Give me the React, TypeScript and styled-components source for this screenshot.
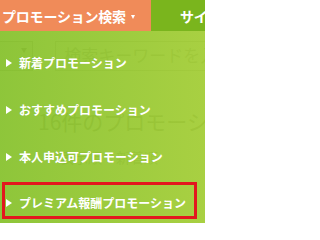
import React from "react";
import styled, { createGlobalStyle } from "styled-components";

const GlobalStyle = createGlobalStyle`
  html, body {
    margin: 0;
    padding: 0;
    background: #ffffff;
    width: 205px;
    height: 223px;
    overflow: hidden;
  }
  body {
    font-family: "Noto Sans CJK JP", "Noto Sans", "Liberation Sans", sans-serif;
  }
`;

const Page = styled.div`
  width: 205px;
  height: 223px;
  display: flex;
  flex-direction: column;
  overflow: hidden;
`;

const TopNav = styled.nav`
  display: flex;
  height: 31px;
  flex: 0 0 31px;
`;

const NavTab = styled.div<{ $active?: boolean }>`
  display: flex;
  align-items: center;
  flex: ${(p) => (p.$active ? "0 0 151px" : "1 1 auto")};
  padding-left: ${(p) => (p.$active ? "2px" : "29px")};
  background: ${(p) => (p.$active ? "#f08b59" : "#7ab51d")};
  color: #ffffff;
  font-size: 14px;
  font-weight: 700;
  letter-spacing: -0.2px;
  white-space: nowrap;
  overflow: hidden;
  box-sizing: border-box;
`;

const Caret = styled.span`
  display: inline-block;
  width: 0;
  height: 0;
  margin-left: 5px;
  margin-top: 2px;
  border-left: 2.5px solid transparent;
  border-right: 2.5px solid transparent;
  border-top: 4px solid #ffffff;
`;

const Content = styled.div`
  position: relative;
  flex: 1 1 auto;
  overflow: hidden;
`;

const SearchRow = styled.div`
  display: flex;
  align-items: flex-start;
  gap: 22px;
  padding-top: 10px;
`;

const SelectBox = styled.div`
  position: relative;
  width: 40px;
  height: 30px;
  border: 1px solid #999999;
  border-left: none;
  background: #eeeeee;
  box-sizing: border-box;
  &::after {
    content: "";
    position: absolute;
    right: 5px;
    top: 6px;
    border-left: 3px solid transparent;
    border-right: 3px solid transparent;
    border-top: 5px solid #555555;
  }
`;

const SearchInput = styled.div`
  flex: 1 1 auto;
  height: 30px;
  border: 1px solid #aaaaaa;
  border-right: none;
  padding-left: 8px;
  font-size: 17px;
  line-height: 26px;
  color: #888888;
  white-space: nowrap;
  overflow: hidden;
  box-sizing: border-box;
`;

const ResultCount = styled.div`
  margin: 38px 0 0 38px;
  font-size: 21px;
  line-height: 24px;
  color: #666666;
  white-space: nowrap;
`;

const SortRow = styled.div`
  margin: 14px 0 0 60px;
  font-size: 14px;
  color: #777777;
  white-space: nowrap;
`;

const DropdownPanel = styled.ul`
  position: absolute;
  inset: 0;
  margin: 0;
  padding: 8px 0 0 0;
  list-style: none;
  display: flex;
  flex-direction: column;
  background: linear-gradient(
    to right,
    rgba(135, 194, 46, 0.94),
    rgba(163, 205, 54, 0.94)
  );
`;

const MenuItem = styled.li<{ $highlight?: boolean }>`
  display: flex;
  align-items: center;
  box-sizing: border-box;
  height: ${(p) => (p.$highlight ? "37px" : "47px")};
  margin: ${(p) => (p.$highlight ? "2px 8px 0 2px" : "0")};
  padding: ${(p) => (p.$highlight ? "4px 0 0 1px" : "0 0 0 6px")};
  border: ${(p) => (p.$highlight ? "3px solid #e3171e" : "none")};
  color: #ffffff;
  font-size: 12px;
  font-weight: 700;
  white-space: nowrap;
  cursor: pointer;
`;

const Arrow = styled.span`
  display: inline-block;
  width: 0;
  height: 0;
  margin-right: 7px;
  border-top: 4px solid transparent;
  border-bottom: 4px solid transparent;
  border-left: 6px solid #ffffff;
`;

const items = [
  "新着プロモーション",
  "おすすめプロモーション",
  "本人申込可プロモーション",
  "プレミアム報酬プロモーション",
];

export default function App() {
  return (
    <>
      <GlobalStyle />
      <Page>
        <TopNav>
          <NavTab $active>
            プロモーション検索
            <Caret />
          </NavTab>
          <NavTab>サイト内検索</NavTab>
        </TopNav>
        <Content>
          <SearchRow>
            <SelectBox />
            <SearchInput>検索キーワードを入力</SearchInput>
          </SearchRow>
          <ResultCount>16件のプロモーション</ResultCount>
          <SortRow>表示順：新着順</SortRow>
          <DropdownPanel>
            {items.map((label, i) => (
              <MenuItem key={label} $highlight={i === items.length - 1}>
                <Arrow />
                {label}
              </MenuItem>
            ))}
          </DropdownPanel>
        </Content>
      </Page>
    </>
  );
}
